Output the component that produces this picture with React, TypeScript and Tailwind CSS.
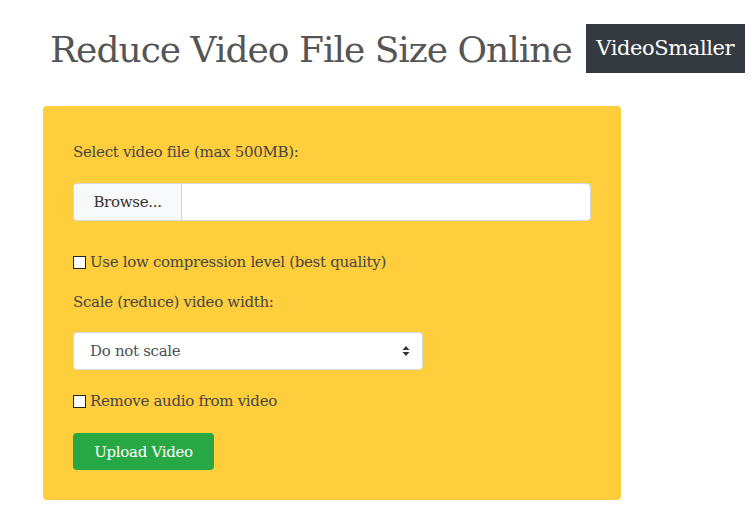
import React from "react";

export default function App() {
  const font = { fontFamily: '"DejaVu Serif", "Liberation Serif", serif' };
  return (
    <div className="w-[754px] h-[525px] bg-white overflow-hidden relative" style={font}>
      <div className="flex items-start pt-[24px]">
        <h1 className="ml-[50px] mt-[4px] text-[36px] leading-[44px] tracking-[-1px] text-[#555555] whitespace-nowrap">
          Reduce Video File Size Online
        </h1>
        <div className="ml-[14px] h-[49px] w-[159px] bg-[#343a40] text-white text-[21px] tracking-[-0.4px] flex items-center justify-center whitespace-nowrap">
          VideoSmaller
        </div>
      </div>
      <div className="ml-[43px] mt-[33px] w-[578px] h-[394px] bg-[#ffce3d] rounded-[4px] px-[30px] pt-[34px] text-[#464646] text-[15px] tracking-[-0.3px] leading-[24px]">
        <div>Select video file (max 500MB):</div>
        <div className="mt-[19px] flex h-[38px] w-[518px] rounded-[4px] border border-[#d4d8dd] bg-white overflow-hidden">
          <div className="w-[108px] bg-[#f8f9fa] border-r border-[#d4d8dd] flex items-center justify-center text-[#333]">
            Browse...
          </div>
          <div className="flex-1" />
        </div>
        <div className="mt-[29px] flex items-center">
          <span className="w-[13px] h-[13px] border border-[#222] bg-white mr-[4px]" />
          <span>Use low compression level (best quality)</span>
        </div>
        <div className="mt-[16px]">Scale (reduce) video width:</div>
        <div className="mt-[18px] h-[38px] w-[350px] rounded-[4px] border border-[#d4d8dd] bg-white flex items-center pl-[16px] pr-[12px] text-[#495057]">
          <span className="flex-1">Do not scale</span>
          <svg width="8" height="12" viewBox="0 0 8 12">
            <path d="M4 1 L7.5 5 H0.5 Z" fill="#333" />
            <path d="M4 11 L7.5 7 H0.5 Z" fill="#333" />
          </svg>
        </div>
        <div className="mt-[19px] flex items-center">
          <span className="w-[13px] h-[13px] border border-[#222] bg-white mr-[4px]" />
          <span>Remove audio from video</span>
        </div>
        <div className="mt-[20px] h-[37px] w-[141px] rounded-[4px] bg-[#28a745] text-white flex items-center justify-center">
          Upload Video
        </div>
      </div>
    </div>
  );
}
